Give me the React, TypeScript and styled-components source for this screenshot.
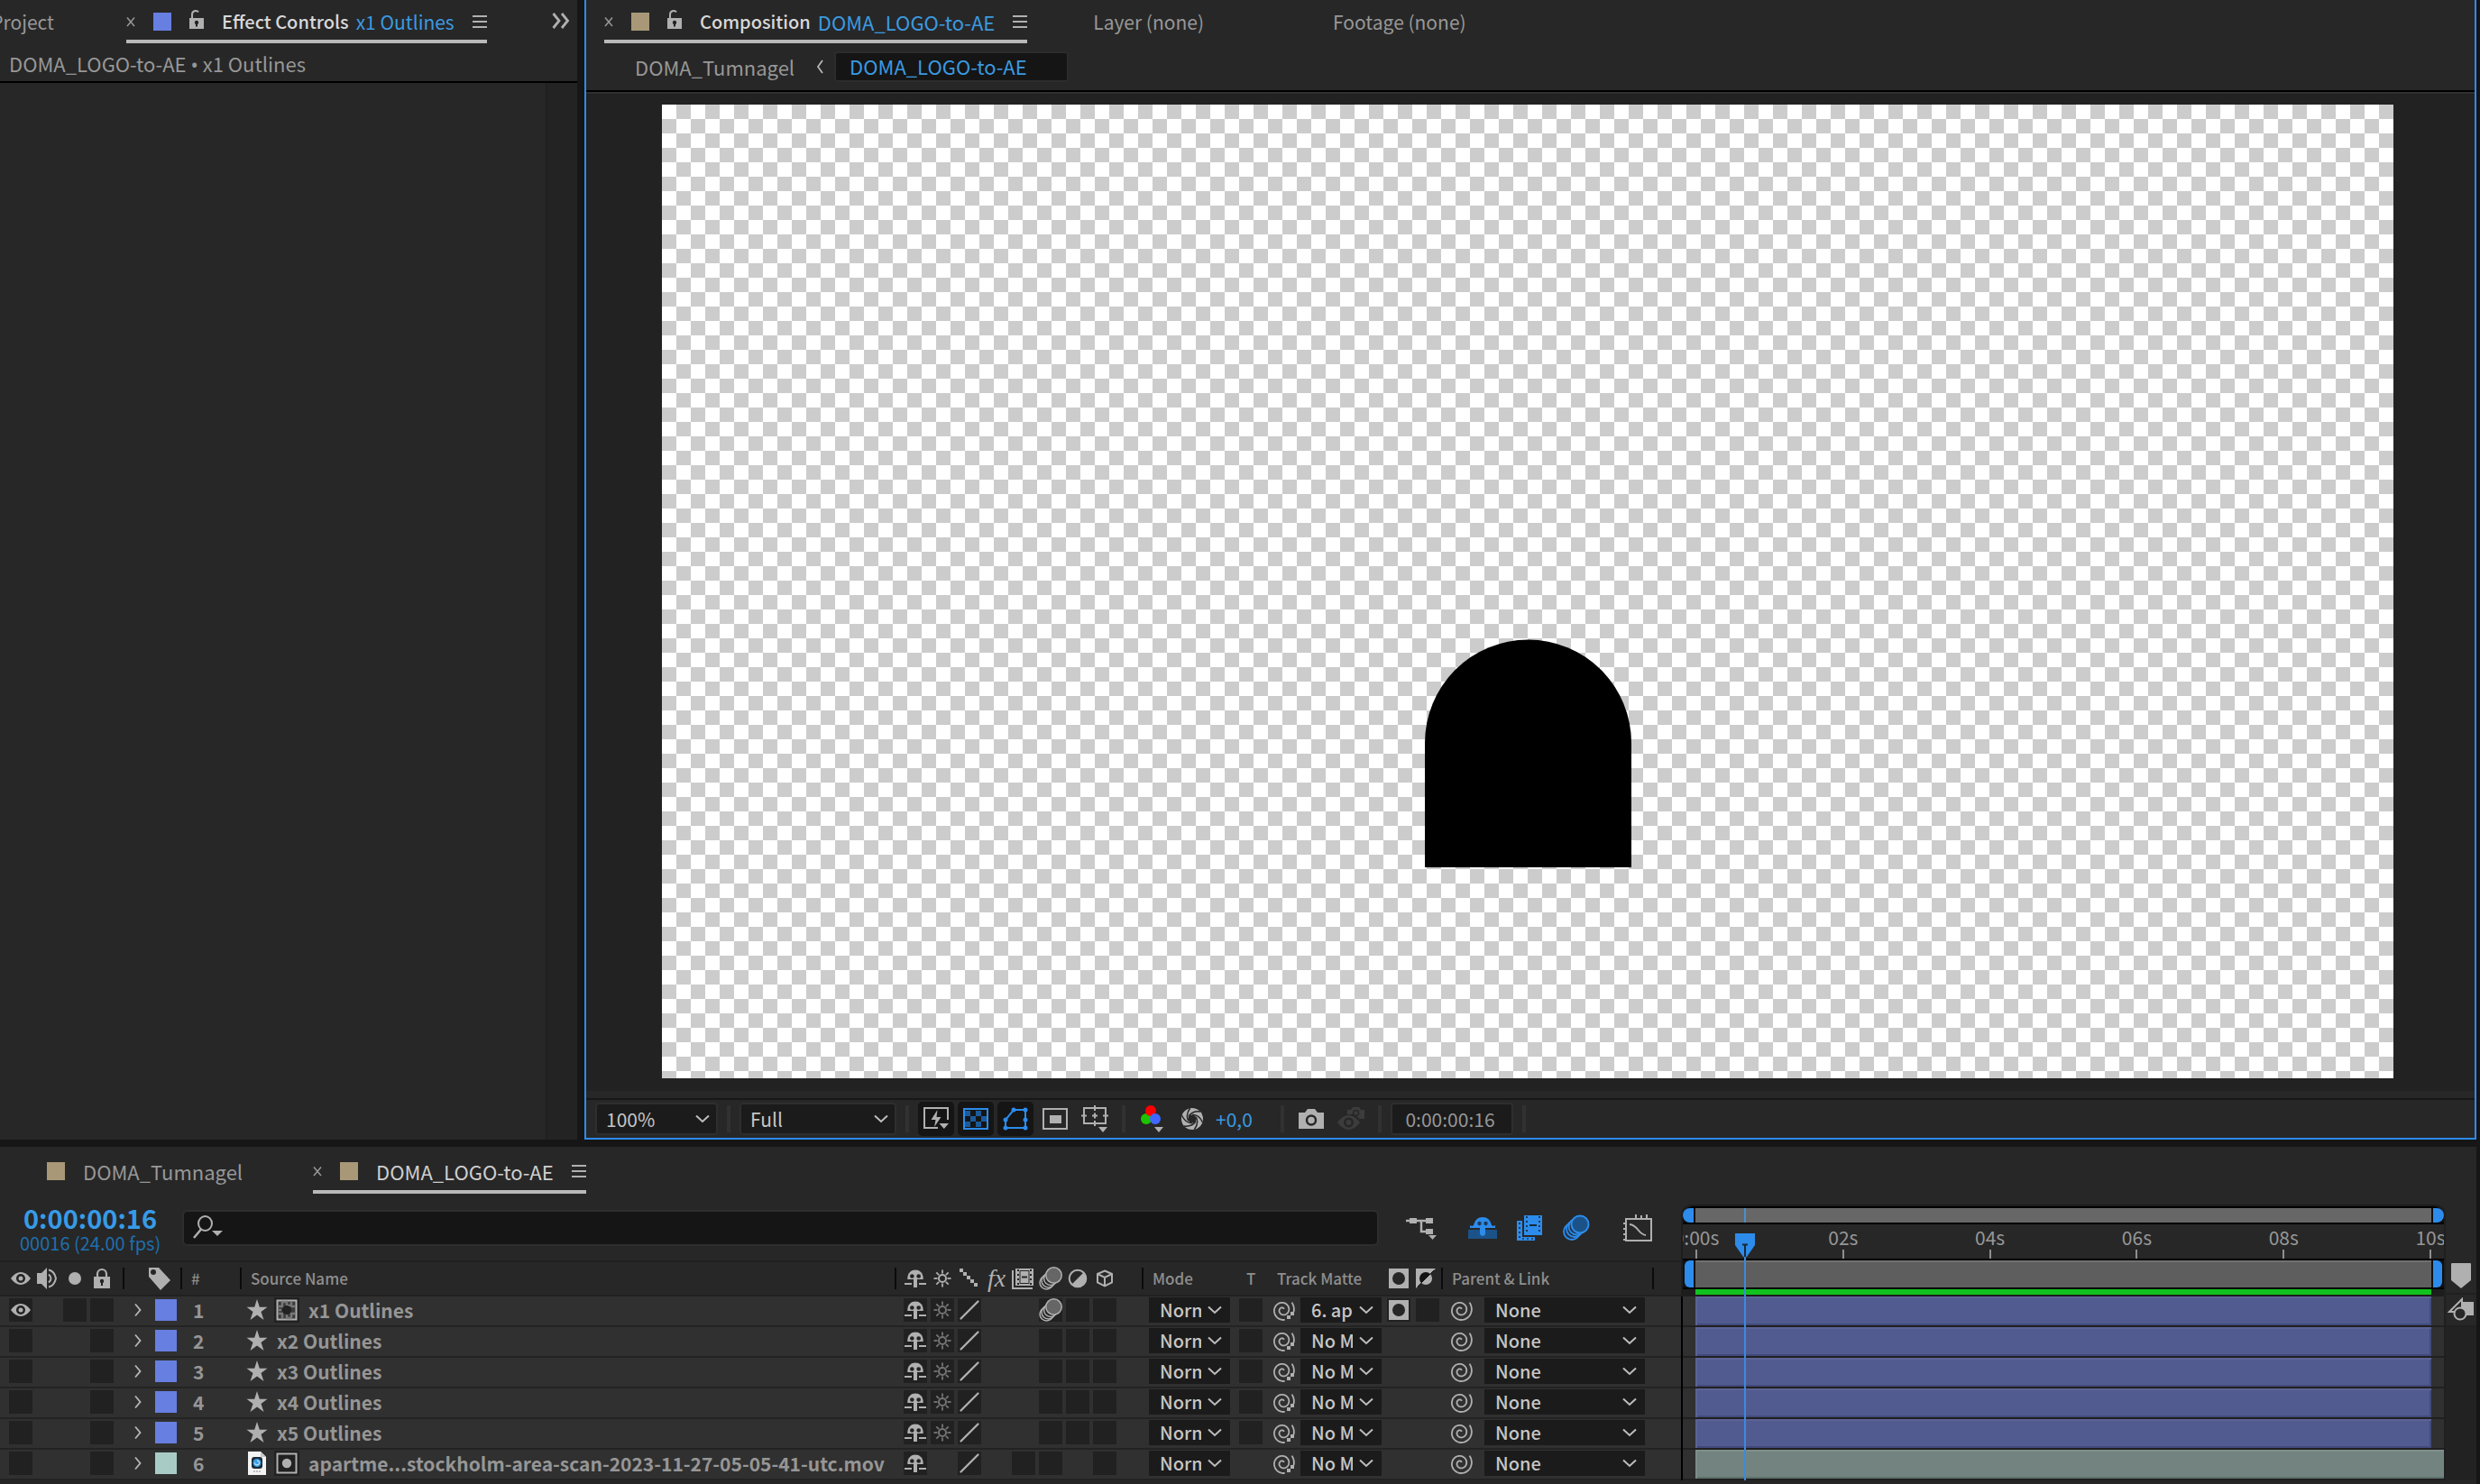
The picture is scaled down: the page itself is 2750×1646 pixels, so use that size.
import React from 'react';
import styled, { createGlobalStyle, css } from 'styled-components';

const c = {
  gap: '#161616',
  panel: '#272727',
  well: '#222222',
  row: '#303030',
  field: '#1b1b1b',
  icon: '#b0b0b0',
  text: '#979797',
  bright: '#d8d8d8',
  blue: '#2d8ceb',
  link: '#3b9ae1',
  tan: '#a89878',
  violet: '#667fe0',
  aqua: '#a9cbc6',
};

const GlobalStyle = createGlobalStyle`
  *, *::before, *::after { box-sizing: border-box; }
  html, body { margin: 0; background: ${c.gap}; }
  body, button, select, input {
    font-family: 'Noto Sans CJK SC', 'Noto Sans', sans-serif;
    font-size: 21px;
    line-height: 28px;
    color: ${c.text};
  }
  button { border: 0; padding: 0; margin: 0; background: none; }
  svg { display: block; flex: none; }
`;

const Window = styled.div`
  display: flex;
  flex-direction: column;
  gap: 8px;
  min-height: 100vh;
  padding-right: 4px;
  overflow: hidden;
`;

const Upper = styled.div`
  display: grid;
  grid-template-columns: minmax(0, 320fr) minmax(0, 1049fr);
  gap: 8px;
`;

const Panel = styled.section<{ $active?: boolean }>`
  display: flex;
  flex-direction: column;
  background: ${c.panel};
  min-width: 0;
  ${p => p.$active && css`
    border: solid ${c.blue};
    border-width: 0 2px 2px;
  `}
`;

/* ---------- tabs ---------- */

const TabBar = styled.header<{ $tall?: boolean; $inset?: number }>`
  display: flex;
  height: ${p => (p.$tall ? 52 : 48)}px;
  padding-top: ${p => (p.$tall ? 6 : 4)}px;
  padding-left: ${p => p.$inset ?? 0}px;
`;

const Tab = styled.div<{ $on?: boolean; $gapAfter?: number }>`
  display: flex;
  align-items: center;
  gap: 20px;
  border-bottom: 4px solid ${p => (p.$on ? '#b9b9b9' : 'transparent')};
  margin-right: ${p => p.$gapAfter ?? 0}px;
  white-space: nowrap;
`;

const ClippedTab = styled(Tab)`
  width: 60px;
  justify-content: flex-end;
  overflow: hidden;
`;

const TabLabel = styled.span<{ $on?: boolean; $large?: boolean }>`
  color: ${p => (p.$on ? '#cfcfcf' : c.text)};
  font-size: ${p => (p.$large ? 22 : 21)}px;
`;

const TabTitle = styled.span`
  display: flex;
  gap: 8px;
  font-size: 20px;
  font-weight: 500;
  color: ${c.bright};
`;

const TabTarget = styled.span<{ $large?: boolean }>`
  font-size: ${p => (p.$large ? 22 : 21)}px;
  font-weight: 400;
  color: ${c.link};
`;

const Swatch = styled.span<{ $color: string; $large?: boolean }>`
  width: ${p => (p.$large ? 24 : 20)}px;
  height: ${p => (p.$large ? 24 : 20)}px;
  background: ${p => p.$color};
`;

const Overflow = styled.button`
  margin-left: auto;
  padding-right: 8px;
  height: 38px;
`;

/* ---------- effect controls ---------- */

const EffectPath = styled.div`
  height: 44px;
  padding: 8px 10px 0;
  border-bottom: 2px solid #000;
  font-size: 22px;
`;

const Bullet = styled.span`
  font-family: 'Noto Sans', sans-serif;
`;

const EffectBody = styled.div`
  flex: 1;
  display: flex;
  justify-content: flex-end;
`;

const ScrollTrack = styled.div`
  width: 35px;
  background: #232323;
  border-left: 2px solid #202020;
`;

/* ---------- composition ---------- */

const Crumbs = styled.nav`
  display: flex;
  align-items: center;
  height: 54px;
  padding-left: 54px;
  border-bottom: 2px solid #000;
  font-size: 22px;
`;

const Crumb = styled.a<{ $on?: boolean }>`
  color: ${c.text};
  text-decoration: none;
  ${p => p.$on && css`
    margin-left: 12px;
    width: 260px;
    height: 34px;
    line-height: 28px;
    padding-left: 15px;
    color: ${c.link};
    background: #151515;
    border: 2px solid #2c2c2c;
    border-radius: 4px;
  `}
`;

const CrumbArrow = styled.span`
  margin-left: 24px;
`;

const Viewer = styled.div`
  background: ${c.well};
  border-top: 2px solid ${c.row};
  padding: 12px 90px 14px 84px;
`;

const Canvas = styled.div`
  aspect-ratio: 16 / 9;
  background: repeating-conic-gradient(#cccccc 0 25%, #ffffff 0 50%) 0 0 / 32px 32px;
  svg { width: 100%; height: 100%; }
`;

const Toolbar = styled.div`
  display: flex;
  align-items: center;
  gap: 10px;
  margin-top: 8px;
  height: 44px;
  padding-left: 10px;
  border-top: 2px solid #171717;
`;

const Rule = styled.span`
  width: 4px;
  height: 30px;
  background: #313131;
`;

const ToolGroup = styled.div`
  display: flex;
  align-items: center;
  gap: 4px;
`;

const Tool = styled.button<{ $on?: boolean }>`
  display: grid;
  place-items: center;
  width: 40px;
  height: 38px;
  border-radius: 5px;
  background: ${p => (p.$on ? '#151515' : 'none')};
`;

const Exposure = styled.button`
  width: 64px;
  padding-left: 2px;
  text-align: left;
  color: ${c.link};
`;

const Timecode = styled.input`
  width: 136px;
  height: 36px;
  padding: 0 4px 0 0;
  text-align: center;
  background: ${c.field};
  border: 2px solid #2e2e2e;
  border-radius: 4px;
`;

/* ---------- drop-downs ---------- */

const Pick = styled.span<{ $width: number; $bar?: boolean }>`
  display: grid;
  align-items: center;
  width: ${p => p.$width}px;
  height: ${p => (p.$bar ? 36 : 28)}px;
  background: ${c.field};
  ${p => p.$bar && css`
    border: 2px solid #2e2e2e;
    border-radius: 4px;
  `}
  select, svg { grid-area: 1 / 1; }
  svg { justify-self: end; margin-right: ${p => (p.$bar ? 7 : 9)}px; pointer-events: none; }
  select {
    appearance: none;
    width: 100%;
    height: 28px;
    margin: 0;
    padding: 0 32px 0 ${p => (p.$bar ? 10 : 12)}px;
    border: 0;
    background: none;
    font-size: ${p => (p.$bar ? 21 : 20)}px;
    font-weight: ${p => (p.$bar ? 400 : 500)};
    color: #c6c6c6;
    overflow: hidden;
    text-overflow: clip;
  }
`;

/* ---------- timeline ---------- */

const TimelineBody = styled.div`
  display: flex;
`;

const LayerSide = styled.div`
  width: 1864px;
  flex: none;
`;

const Controls = styled.div`
  display: flex;
  align-items: center;
  gap: 30px;
  height: 74px;
  padding: 10px 31px 8px 0;
`;

const Clock = styled.div`
  width: 172px;
  padding: 4px 0 0 22px;
  white-space: nowrap;
  display: grid;
  justify-items: start;
`;

const ClockTime = styled.span`
  padding-left: 4px;
  font-size: 29px;
  line-height: 30px;
  font-weight: 700;
  color: #379be8;
`;

const ClockFrames = styled.span`
  font-size: 20px;
  color: #1f6fae;
`;

const Search = styled.label`
  flex: 1;
  display: flex;
  align-items: center;
  height: 40px;
  padding-left: 10px;
  background: #151515;
  border: 2px solid #2e2e2e;
  border-radius: 6px;
  input {
    flex: 1;
    min-width: 0;
    border: 0;
    outline: 0;
    background: none;
  }
`;

const ControlButtons = styled.div`
  display: flex;
  gap: 34px;
`;

const Toggles = styled.div`
  display: flex;
  gap: 18px;
`;

const ControlButton = styled.button`
  display: grid;
  place-items: center;
  width: 34px;
  height: 34px;
`;

const Layers = styled.table`
  width: 1864px;
  table-layout: fixed;
  border-collapse: separate;
  border-spacing: 0;
  th, td { padding: 0; text-align: left; }
  th { height: 40px; border-top: 2px solid #202020; border-bottom: 2px solid #202020; background: ${c.panel}; }
  td { height: 34px; border-bottom: 2px solid #232323; background: ${c.row}; }
`;

const Head = styled.div<{ $pad?: number; $rule?: boolean; $after?: number }>`
  display: flex;
  align-items: center;
  gap: 4px;
  height: 24px;
  padding-left: ${p => p.$pad ?? 10}px;
  margin-right: ${p => p.$after ?? 0}px;
  border-right: ${p => (p.$rule ? '2px solid #0b0b0b' : '0')};
  font-size: 17px;
  font-weight: 500;
  line-height: 24px;
  color: #8e8e8e;
  white-space: nowrap;
`;

const MatteIcons = styled.span`
  display: flex;
  gap: 4px;
  margin-left: auto;
  padding-right: 4px;
`;

const Cells = styled.div<{ $pad?: number; $gap?: number }>`
  display: flex;
  align-items: center;
  gap: ${p => p.$gap ?? 4}px;
  height: 32px;
  padding-left: ${p => p.$pad ?? 0}px;
  padding-bottom: 2px;
`;

const Slot = styled.span`
  width: 26px;
  height: 26px;
  display: grid;
  place-items: center;
`;

const Switch = styled.button`
  width: 26px;
  height: 26px;
  display: grid;
  place-items: center;
  background: #212121;
`;

const FxMark = styled.span`
  font: italic 28px/24px 'Liberation Serif', serif;
  color: ${c.icon};
`;

const LayerText = styled.span`
  padding-left: 3px;
  font-weight: 700;
  color: #969696;
  white-space: nowrap;
`;

const SourceBadge = styled.span`
  display: grid;
  place-items: center;
  width: 28px;
  height: 28px;
  background: #212121;
`;

/* ---------- time graph ---------- */

const Graph = styled.div`
  position: relative;
  flex: 1;
  min-width: 0;
  margin-top: 12px;
  padding: 2px 0 0 2px;
  background: #1d1d1d;
  border-right: 2px solid #1f1f1f;
  border-radius: 12px 12px 0 0;
`;

const Strip = styled.div<{ $nav?: boolean }>`
  display: flex;
  gap: 2px;
  height: ${p => (p.$nav ? 20 : 34)}px;
  padding: 0 ${p => (p.$nav ? 0 : 2)}px;
  background: #101010;
  border: solid #000;
  border-width: 2px 0;
  ${p => p.$nav && css`border-radius: 12px 12px 0 0;`}
`;

const Handle = styled.button<{ $end?: boolean; $nav?: boolean }>`
  width: ${p => (p.$nav ? 12 : 10)}px;
  background: ${c.blue};
  border-radius: ${p => {
    const r = p.$nav ? 10 : 6;
    return p.$end ? `0 ${r}px ${r}px 0` : `${r}px 0 0 ${r}px`;
  }};
`;

const Range = styled.div<{ $nav?: boolean }>`
  flex: 1;
  background: ${p => (p.$nav ? '#676767' : '#5e5e5e')};
  border: solid #717171;
  border-width: ${p => (p.$nav ? 0 : 2)}px 0 0;
`;

const Ruler = styled.div`
  display: flex;
  justify-content: space-between;
  height: 38px;
  padding: 0 14px;
  background: ${c.panel};
  overflow: hidden;
`;

const Mark = styled.div`
  width: 2px;
  display: flex;
  flex-direction: column;
  align-items: center;
  white-space: nowrap;
  &::after { content: ''; flex: 1; width: 2px; background: #8f8f8f; }
`;

const Cache = styled.div`
  height: 8px;
  padding: 0 14px 2px;
  background: #1d1d1d;
  &::before { content: ''; display: block; height: 6px; background: #11c21f; }
`;

const Tracks = styled.div`
  margin-left: -2px;
  border-left: 2px solid #000;
`;

const Track = styled.div<{ $full?: boolean }>`
  height: 34px;
  padding: 0 ${p => (p.$full ? 0 : 14)}px 0 14px;
  background: ${c.row};
  border-bottom: 2px solid #202020;
`;

const Bar = styled.div<{ $footage?: boolean }>`
  height: 32px;
  background: ${p => (p.$footage ? '#738480' : '#525b90')};
  border: solid ${p => (p.$footage ? '#7f8e8a' : '#5c6396')};
  border-width: 2px 0 0 2px;
  box-shadow: inset ${p => (p.$footage ? '0 -2px #5f716c' : '-2px -2px #424a7c')};
`;

const PlayLayer = styled.div`
  position: absolute;
  inset: 0 14px 0 16px;
  pointer-events: none;
`;

const Playhead = styled.div`
  position: absolute;
  top: 2px;
  bottom: 0;
  width: 22px;
  margin-left: -10px;
  display: flex;
  flex-direction: column;
  align-items: center;
  &::before { content: ''; width: 2px; height: 16px; margin: 2px 0 12px; background: #4a8fd0; }
  &::after { content: ''; width: 2px; flex: 1; background: #3b8ade; }
`;

const MarkerBin = styled.div`
  width: 34px;
  flex: none;
  background: ${c.well};
`;

const MarkerCell = styled.div<{ $tall?: boolean }>`
  display: flex;
  justify-content: center;
  align-items: flex-end;
  height: ${p => (p.$tall ? 112 : 36)}px;
  padding-bottom: 5px;
  background: ${c.panel};
  border-bottom: 2px solid #202020;
`;

const Filler = styled.div`
  height: 4px;
  background: #252525;
`;

/* ---------- icons ---------- */

const Svg = ({ w, h = w, children }: { w: number; h?: number; children: React.ReactNode }) => (
  <svg width={w} height={h} viewBox={`0 0 ${w} ${h}`} fill="none" aria-hidden="true">{children}</svg>
);
const I = c.icon;

const Close = () => <Svg w={10} h={14}><path d="M1 2.5 9 12M9 2.5 1 12" stroke="#999" strokeWidth="1.5" /></Svg>;
const Burger = () => <Svg w={16} h={14}><path d="M0 1h16M0 7h16M0 13h16" stroke={I} strokeWidth="2" /></Svg>;
const OpenLock = () => (
  <Svg w={16} h={26}>
    <path d="M0 9h16v12H0z" fill={I} />
    <path d="M3 9V5a4 4 0 0 1 7-2.6" stroke={I} strokeWidth="2" />
    <circle cx="8" cy="14" r="2.2" fill="#222" /><path d="M7 14h2v4.5H7z" fill="#222" />
  </Svg>
);
const Chevrons = () => <Svg w={20} h={18}><path d="m1.5 1 6.500 8-6.500 8M11 1l6.500 8-6.500 8" stroke={I} strokeWidth="2.800" /></Svg>;
const Down = () => <Svg w={16} h={10}><path d="m1 1.500 7 6.500 7-6.500" stroke="#bdbdbd" strokeWidth="2" /></Svg>;
const Left = () => <Svg w={8} h={16}><path d="M7 1 2 8l5 7" stroke="#b5b5b5" strokeWidth="1.800" /></Svg>;
const Twirl = () => <Svg w={8} h={16}><path d="m1 1.500 5.500 6.500L1 14.500" stroke="#b8b8b8" strokeWidth="1.800" /></Svg>;

const FastPreview = () => (
  <Svg w={30} h={28}>
    <path d="M17 24H2V2h26v13" stroke={I} strokeWidth="2" />
    <path d="m16.500 4-7 11h5l-1.500 8 7.500-11h-5z" fill={I} />
    <path d="M18.500 19h10.500l-5.200 6z" fill={I} />
  </Svg>
);
const Grid = () => (
  <Svg w={28} h={24}>
    <path d="M1 1h26v22H1z" stroke={c.blue} strokeWidth="2" />
    <path d="M2 3h6v6H2zM14 3h6v6h-6zM8 9h6v6H8zM20 9h6v6h-6zM2 15h6v6H2zM14 15h6v6h-6z" fill="#1b5b9d" />
  </Svg>
);
const MaskPath = () => (
  <Svg w={28} h={26}>
    <path d="M3 23V14L12 3h13v20z" stroke={c.blue} strokeWidth="2" />
    {[[12, 3], [25, 3], [3, 14], [25, 14], [3, 23], [25, 23]].map(([x, y]) => (
      <circle key={`${x}-${y}`} cx={x} cy={y} r="2.500" fill={c.blue} />
    ))}
  </Svg>
);
const Region = () => (
  <Svg w={28} h={24}><path d="M1 1h26v22H1z" stroke={I} strokeWidth="2" /><path d="M8 8h13v9H8z" fill={I} /></Svg>
);
const Guides = () => (
  <Svg w={30} h={30}>
    <path d="M3 3h24v17H3z" stroke={I} strokeWidth="2" />
    <path d="M15 0v6M15 17v6M0 11.500h6M24 11.500h6M15 8.500v6M12 11.500h6" stroke={I} strokeWidth="2" />
    <path d="M19 24h10l-5 6z" fill={I} />
  </Svg>
);
const Channels = () => (
  <Svg w={26} h={30}>
    <circle cx="6" cy="15" r="6" fill="#1cc400" /><circle cx="11" cy="6" r="6" fill="#ff0000" /><circle cx="16" cy="15" r="6" fill="#4068ff" />
    <path d="M15 24h10l-5 6z" fill={I} />
  </Svg>
);
const Aperture = () => (
  <Svg w={24}>
    <circle cx="12" cy="12" r="12" fill={I} /><circle cx="12" cy="12" r="4.500" fill={c.panel} />
    {[0, 60, 120, 180, 240, 300].map(a => (
      <path key={a} d="M8 9.500Q12 3 21 4" transform={`rotate(${a} 12 12)`} stroke={c.panel} strokeWidth="1.500" />
    ))}
  </Svg>
);
const Camera = () => (
  <Svg w={28} h={24}>
    <path d="M0 5h7l3-4h8l3 4h7v18H0z" fill={I} /><circle cx="14" cy="13.500" r="5" stroke={c.panel} strokeWidth="2.500" />
  </Svg>
);
const ShowSnapshot = () => (
  <Svg w={30} h={28}>
    <path d="M0 18q6-8 12.500-8T25 18q-6 8-12.500 8T0 18Z" fill="#3c3c3c" /><circle cx="12.500" cy="18" r="5.500" fill={c.panel} /><circle cx="12.500" cy="18" r="3" fill="#3c3c3c" />
    <path d="M11 4h4l2-3h7l2 3h4v10h-5l-7-5h-7z" fill="#3c3c3c" /><circle cx="20.500" cy="7.500" r="3" stroke={c.panel} strokeWidth="1.500" />
  </Svg>
);
const Magnifier = () => (
  <Svg w={34} h={28}>
    <ellipse cx="13.500" cy="9" rx="7.500" ry="8" stroke={I} strokeWidth="2" /><path d="M9 15.500 1 25" stroke={I} strokeWidth="2.500" />
    <path d="M21 17h12l-6 6z" fill={I} />
  </Svg>
);
const Flow = () => (
  <Svg w={34} h={26}>
    <path d="M0 5h26M17 5v12h8" stroke={I} strokeWidth="2.500" />
    <path d="M4 2h8v6H4zM22 2h8v6h-8zM22 14h8v6h-8z" fill={I} /><path d="M25 21h9l-4.500 5z" fill={I} />
  </Svg>
);
const HideShy = () => (
  <Svg w={32} h={26}>
    <path d="M0 15h32v10H0z" fill="#1b5288" />
    <path d="M2 13v-3l2 1 2-1q2-9 10-9t10 9l2 1 2-1v3z" fill={c.blue} />
    <circle cx="12.500" cy="8" r="2.200" fill="#1b3a5c" /><circle cx="19.500" cy="8" r="2.200" fill="#1b3a5c" />
    <path d="M13 10h6v10q-3 4-6 0z" fill={c.blue} />
  </Svg>
);
const FrameBlend = () => (
  <Svg w={28}>
    <path d="M0 6h6v18h14v4H0z" fill={c.blue} /><path d="M8 0h20v22H8z" fill={c.blue} />
    <path d="M11 1v20M25 1v20M3 8v17" stroke="#1c3a5a" strokeWidth="2" strokeDasharray="2 3" />
    <path d="M6 26h14" stroke="#1c3a5a" strokeWidth="1.500" strokeDasharray="2 3" /><path d="M14 11h8" stroke="#16293c" strokeWidth="2" />
  </Svg>
);
const BlurAll = () => (
  <Svg w={30}>
    {[[10, 19], [13, 16], [15.5, 13.5]].map(([x, y]) => <circle key={x} cx={x} cy={y} r="9" fill="#1f3650" stroke={c.blue} strokeWidth="1.800" />)}
    <circle cx="19" cy="11" r="9.500" fill="#1b5288" stroke={c.blue} strokeWidth="2" />
  </Svg>
);
const GraphEditor = () => (
  <Svg w={32} h={30}>
    <path d="M3 5h28v24H3z" stroke={I} strokeWidth="2" /><path d="M7 11c10 1 9 11 18 12" stroke={I} strokeWidth="2" />
    <path d="M14 4V0M20 4V1M26 4V0M2 10H0M2 16H0M2 22H0M2 28H0" stroke={I} strokeWidth="2" />
  </Svg>
);

const Eye = () => (
  <Svg w={22} h={16}>
    <path d="M0 8q5-7 11-7t11 7q-5 7-11 7T0 8Z" fill={I} /><circle cx="11" cy="8" r="5" fill="#222" /><circle cx="11" cy="8" r="2.500" fill={I} />
  </Svg>
);
const Speaker = () => (
  <Svg w={24}>
    <path d="M0 6h5l6-6v24l-6-6H0z" fill={I} /><path d="M13 7.500q5 4.500 0 9M13 2.500q6 1 8 9.500-2 8.500-8 9.500" stroke={I} strokeWidth="2" />
  </Svg>
);
const Dot = () => <Svg w={14}><circle cx="7" cy="7" r="7" fill={I} /></Svg>;
const Lock = () => (
  <Svg w={18} h={24}>
    <path d="M0 10h18v13H0z" fill={I} /><path d="M4 10V7a5 5 0 0 1 10 0v3" stroke={I} strokeWidth="2.200" />
    <circle cx="9" cy="15" r="2.200" fill="#222" /><path d="M8 15h2v5H8z" fill="#222" />
  </Svg>
);
const Tag = () => (
  <Svg w={24} h={25}><path d="M0 0h11l13 14-11 11L0 10z" fill={I} /><circle cx="5" cy="5" r="3" fill={c.panel} /></Svg>
);
const Star = () => (
  <Svg w={24} h={24}><path d="m12 0 2.800 8.800H23.500l-7 5.200 3 9L12 17.600 4.500 23l3-9-7-5.200h8.700z" fill={I} /></Svg>
);
const MovieFile = () => (
  <Svg w={24} h={26}>
    <path d="M2 0h14l6 6v20H2z" fill="#f4f4f4" /><path d="M16 0v6h6z" fill="#c9c9c9" />
    <rect x="6" y="6" width="12" height="13" rx="3" fill="#1c2a36" /><circle cx="12" cy="12.500" r="4.500" fill="#3aa0e6" />
    <path d="M12 10a2.500 2.500 0 1 1-2.500 2.500" stroke="#e5f3fc" strokeWidth="1" /><path d="M8 22h8" stroke="#aaa" strokeWidth="1.500" strokeDasharray="2 1" />
  </Svg>
);
const MatteSource = () => (
  <Svg w={24}>
    <path d="M1.500 1.500h21v21h-21z" stroke={I} strokeWidth="2" fill="#3a3a3a" />
    <path d="M3 8h4V3h5v4h5V3M21 8h-4M3 16h4v5M21 16h-4v5h-5v-4M3 12h3" stroke="#777" strokeWidth="2.500" />
    <circle cx="12" cy="12" r="5" fill="#222" />
  </Svg>
);
const MatteUsed = () => (
  <Svg w={24}><path d="M1.500 1.500h21v21h-21z" stroke={I} strokeWidth="2" /><circle cx="12" cy="12" r="5.200" fill={I} /></Svg>
);
const Shy = () => (
  <Svg w={26}>
    <path d="M4.300 14C3.500 0 22.500 0 21.700 14z" fill={I} /><circle cx="9.300" cy="10.500" r="2.300" fill="#222" /><circle cx="16.700" cy="10.500" r="2.300" fill="#222" />
    <path d="M11 12h4v11h-4zM1 18h8v2H1zM17 18h8v2h-8z" fill={I} />
  </Svg>
);
const Sun = ({ dim }: { dim?: boolean }) => {
  const s = dim ? '#757575' : I;
  return (
    <Svg w={26}>
      <circle cx="13" cy="13" r="4" stroke={s} strokeWidth="2" />
      {[0, 45, 90, 135, 180, 225, 270, 315].map(a => (
        <path key={a} d="M13 3.500v4" transform={`rotate(${a} 13 13)`} stroke={s} strokeWidth="1.800" />
      ))}
    </Svg>
  );
};
const Quality = () => <Svg w={26}><path d="M3.500 22.500 22.500 3.500" stroke={I} strokeWidth="2.300" strokeLinecap="round" /></Svg>;
const Steps = () => <Svg w={26}><path d="M2 2h4v4H2zM6 6h4v4H6zM10 10h4v4h-4zM14 14h4v4h-4zM18 18h4v4h-4z" fill={I} /></Svg>;
const Film = () => (
  <Svg w={26}>
    <path d="M1 4v20h22" stroke={I} strokeWidth="2" /><path d="M4 2h20v19H4z" fill={I} />
    <path d="M7 3v17M21 3v17" stroke="#262626" strokeWidth="2" strokeDasharray="2 3" /><path d="M9 4.500h10v14H9z" stroke="#262626" strokeWidth="1" /><path d="M11 11.500h6" stroke="#262626" strokeWidth="2" />
  </Svg>
);
const Blur = () => (
  <Svg w={26}>
    {[[8.5, 17.5], [10.5, 15.5], [13, 13]].map(([x, y]) => <circle key={x} cx={x} cy={y} r="7.500" fill="#252525" stroke={I} strokeWidth="1.500" />)}
    <circle cx="16.500" cy="9.500" r="8.700" fill="#666" stroke={I} strokeWidth="1.500" />
  </Svg>
);
const Adjust = () => <Svg w={26}><circle cx="13" cy="13" r="9.300" stroke={I} strokeWidth="2" /><path d="M20 6a9.500 9.500 0 0 1-14 14z" fill={I} /></Svg>;
const Cube = () => <Svg w={26}><path d="m13 4.500 8 3.500v9.500L13 21.500 5 17.500V8zM5 8l8 4 8-4M13 12v9.500" stroke={I} strokeWidth="2" /></Svg>;

/* Inward clockwise spiral between two turn counts, starting at the upper right. */
const spiral = (from: number, to: number) => {
  const steps = Math.round((to - from) * 36);
  return Array.from({ length: steps + 1 }, (_, i) => {
    const t = from + ((to - from) * i) / steps;
    const a = (t * 360 - 40) * (Math.PI / 180);
    const r = 13 * (1 - t / 2.3);
    return `${i ? 'L' : 'M'}${(10.5 + r * Math.cos(a)).toFixed(1)} ${(12 + r * Math.sin(a)).toFixed(1)}`;
  }).join('');
};
const fullSpiral = spiral(0, 2);
const brokenSpiral = spiral(0, 0.14) + spiral(0.33, 2);

const Whip = ({ matte }: { matte?: boolean }) => (
  <Svg w={24}>
    <path d={matte ? brokenSpiral : fullSpiral} stroke={I} strokeWidth="1.800" strokeLinejoin="round" />
    {matte && <path d="M15 18h4v4h-4zM19 14h4v4h-4z" fill={I} />}
  </Svg>
);
const AlphaMatte = () => <Svg w={22}><path d="M0 0h22v22H0z" fill={I} /><circle cx="11" cy="11" r="7" fill="#262626" /></Svg>;
const InvertMatte = () => (
  <Svg w={22}>
    <path d="M0 0h22L0 22z" fill={I} /><circle cx="11" cy="11" r="7" fill="#141414" /><path d="M16 6a7 7 0 0 1-10 10z" fill={I} /><path d="M20 2 2 20" stroke="#141414" strokeWidth="1" />
  </Svg>
);
const Marker = () => <Svg w={22} h={28}><path d="M0 1q0-1 1-1h20q1 0 1 1v18L11 28 0 19z" fill={I} /></Svg>;
const Shapes = () => (
  <Svg w={30} h={26}>
    <path d="M15 5h14v15H15z" fill={I} /><path d="M2 16 16 2v14z" stroke={I} strokeWidth="2" fill={c.panel} />
    <circle cx="14" cy="18" r="6.500" fill={c.panel} stroke={I} strokeWidth="2" />
  </Svg>
);
const PlayheadCap = () => (
  <Svg w={22} h={26}>
    <path d="M0 0h22v13l-9 13H9L0 13z" fill={c.blue} /><path d="M8 12.500h6M11 12v14" stroke="#1c2733" strokeWidth="2" />
  </Svg>
);

/* ---------- data ---------- */

type Layer = {
  name: string;
  kind: 'shape' | 'movie';
  badge?: 'source' | 'matte';
  visible?: boolean;
  blur?: boolean;
  matte: string;
};

const layers: Layer[] = [
  { name: 'x1 Outlines', kind: 'shape', badge: 'source', visible: true, blur: true, matte: '6. apartment' },
  { name: 'x2 Outlines', kind: 'shape', matte: 'No Matte' },
  { name: 'x3 Outlines', kind: 'shape', matte: 'No Matte' },
  { name: 'x4 Outlines', kind: 'shape', matte: 'No Matte' },
  { name: 'x5 Outlines', kind: 'shape', matte: 'No Matte' },
  { name: 'apartme...stockholm-area-scan-2023-11-27-05-05-41-utc.mov', kind: 'movie', badge: 'matte', matte: 'No Matte' },
];

const columns = [138, 64, 66, 726, 274, 106, 32, 194, 264];
const marks = ['0:00s', '02s', '04s', '06s', '08s', '10s'];
const currentFrame = 16;
const totalFrames = 240;

const Dropdown = ({ label, value, width, bar }: { label: string; value: string; width: number; bar?: boolean }) => (
  <Pick $width={width} $bar={bar}>
    <select aria-label={label} defaultValue={value}><option>{value}</option></select>
    <Down />
  </Pick>
);

const LayerRow = ({ layer, n }: { layer: Layer; n: number }) => {
  const shape = layer.kind === 'shape';
  return (
    <tr>
      <td>
        <Cells $pad={10}>
          <Switch aria-label="Video">{layer.visible && <Eye />}</Switch>
          <Slot />
          {n === 1 ? <Switch aria-label="Solo" /> : <Slot />}
          <Switch aria-label="Lock" />
        </Cells>
      </td>
      <td>
        <Cells $pad={11} $gap={15}>
          <button aria-label="Expand layer"><Twirl /></button>
          <Swatch $color={shape ? c.violet : c.aqua} $large />
        </Cells>
      </td>
      <td><Cells $pad={9}><LayerText>{n}</LayerText></Cells></td>
      <td>
        <Cells $pad={5} $gap={7}>
          {shape ? <Star /> : <MovieFile />}
          {layer.badge && <SourceBadge>{layer.badge === 'source' ? <MatteSource /> : <MatteUsed />}</SourceBadge>}
          <LayerText>{layer.name}</LayerText>
        </Cells>
      </td>
      <td>
        <Cells $pad={8}>
          <Switch aria-label="Shy"><Shy /></Switch>
          {shape ? <Switch aria-label="Continuously rasterize"><Sun dim /></Switch> : <Slot />}
          <Switch aria-label="Quality"><Quality /></Switch>
          <Slot />
          {shape ? <Slot /> : <Switch aria-label="Frame blending" />}
          <Switch aria-label="Motion blur">{layer.blur && <Blur />}</Switch>
          {shape ? <Switch aria-label="Adjustment layer" /> : <Slot />}
          <Switch aria-label="3D layer" />
        </Cells>
      </td>
      <td><Cells $pad={6}><Dropdown label="Mode" value="Normal" width={90} /></Cells></td>
      <td><Cells>{shape ? <Switch aria-label="Preserve transparency" /> : <Slot />}</Cells></td>
      <td>
        <Cells $pad={6} $gap={6}>
          <button aria-label="Matte pick whip"><Whip matte /></button>
          <Dropdown label="Track matte" value={layer.matte} width={90} />
          {n === 1 && <><Switch aria-label="Alpha matte"><AlphaMatte /></Switch><Switch aria-label="Invert matte" /></>}
        </Cells>
      </td>
      <td>
        <Cells $pad={9} $gap={13}>
          <button aria-label="Parent pick whip"><Whip /></button>
          <Dropdown label="Parent" value="None" width={178} />
        </Cells>
      </td>
    </tr>
  );
};

export default function App() {
  return (
    <Window>
      <GlobalStyle />
      <Upper>
        <Panel aria-label="Effect Controls">
          <TabBar>
            <ClippedTab $gapAfter={80}><TabLabel>Project</TabLabel></ClippedTab>
            <Tab $on>
              <Close /><Swatch $color={c.violet} /><OpenLock />
              <TabTitle>Effect Controls <TabTarget>x1 Outlines</TabTarget></TabTitle>
              <Burger />
            </Tab>
            <Overflow aria-label="More tabs"><Chevrons /></Overflow>
          </TabBar>
          <EffectPath>DOMA_LOGO-to-AE <Bullet>•</Bullet> x1 Outlines</EffectPath>
          <EffectBody><ScrollTrack /></EffectBody>
        </Panel>

        <Panel $active aria-label="Composition">
          <TabBar $inset={20}>
            <Tab $on $gapAfter={73}>
              <Close /><Swatch $color={c.tan} /><OpenLock />
              <TabTitle>Composition <TabTarget $large>DOMA_LOGO-to-AE</TabTarget></TabTitle>
              <Burger />
            </Tab>
            <Tab $gapAfter={143}><TabLabel>Layer (none)</TabLabel></Tab>
            <Tab><TabLabel>Footage (none)</TabLabel></Tab>
          </TabBar>
          <Crumbs>
            <Crumb href="#tumnagel">DOMA_Tumnagel</Crumb>
            <CrumbArrow><Left /></CrumbArrow>
            <Crumb href="#logo" $on>DOMA_LOGO-to-AE</Crumb>
          </Crumbs>
          <Viewer>
            <Canvas>
              <svg viewBox="0 0 1920 1080" role="img" aria-label="Composition preview">
                <path d="M846 846V708a114.500 114.500 0 0 1 229 0v138z" fill="#000" />
              </svg>
            </Canvas>
          </Viewer>
          <Toolbar>
            <Dropdown label="Magnification" value="100%" width={136} bar />
            <Rule />
            <Dropdown label="Resolution" value="Full" width={174} bar />
            <Rule />
            <ToolGroup>
              <Tool $on aria-label="Fast previews"><FastPreview /></Tool>
              <Tool $on aria-label="Transparency grid"><Grid /></Tool>
              <Tool $on aria-label="Mask and shape paths"><MaskPath /></Tool>
              <Tool aria-label="Region of interest"><Region /></Tool>
              <Tool aria-label="Grid and guides"><Guides /></Tool>
            </ToolGroup>
            <Rule />
            <ToolGroup>
              <Tool aria-label="Channels"><Channels /></Tool>
              <Tool aria-label="Reset exposure"><Aperture /></Tool>
              <Exposure>+0,0</Exposure>
            </ToolGroup>
            <Rule />
            <ToolGroup>
              <Tool aria-label="Take snapshot"><Camera /></Tool>
              <Tool aria-label="Show snapshot"><ShowSnapshot /></Tool>
            </ToolGroup>
            <Rule />
            <Timecode aria-label="Preview time" defaultValue="0:00:00:16" />
            <Rule />
          </Toolbar>
        </Panel>
      </Upper>

      <Panel aria-label="Timeline">
        <TabBar $tall $inset={52}>
          <Tab $gapAfter={78}><Swatch $color={c.tan} /><TabLabel $large>DOMA_Tumnagel</TabLabel></Tab>
          <Tab $on><Close /><Swatch $color={c.tan} /><TabLabel $on $large>DOMA_LOGO-to-AE</TabLabel><Burger /></Tab>
        </TabBar>
        <TimelineBody>
          <LayerSide>
            <Controls>
              <Clock><ClockTime>0:00:00:16</ClockTime><ClockFrames>00016 (24.00 fps)</ClockFrames></Clock>
              <Search><Magnifier /><input aria-label="Search layers" /></Search>
              <ControlButtons>
                <ControlButton aria-label="Mini-flowchart"><Flow /></ControlButton>
                <Toggles>
                  <ControlButton aria-label="Hide shy layers"><HideShy /></ControlButton>
                  <ControlButton aria-label="Frame blending"><FrameBlend /></ControlButton>
                  <ControlButton aria-label="Motion blur"><BlurAll /></ControlButton>
                </Toggles>
                <ControlButton aria-label="Graph editor"><GraphEditor /></ControlButton>
              </ControlButtons>
            </Controls>
            <Layers>
              <colgroup>{columns.map((w, i) => <col key={i} width={w} />)}</colgroup>
              <thead>
                <tr>
                  <th><Head $rule><Slot><Eye /></Slot><Slot><Speaker /></Slot><Slot><Dot /></Slot><Slot><Lock /></Slot></Head></th>
                  <th><Head $rule $pad={27}><Tag /></Head></th>
                  <th><Head $rule>#</Head></th>
                  <th><Head $rule>Source Name</Head></th>
                  <th>
                    <Head $rule $pad={8}>
                      <Slot><Shy /></Slot><Slot><Sun /></Slot><Slot><Steps /></Slot><Slot><FxMark>fx</FxMark></Slot>
                      <Slot><Film /></Slot><Slot><Blur /></Slot><Slot><Adjust /></Slot><Slot><Cube /></Slot>
                    </Head>
                  </th>
                  <th><Head>Mode</Head></th>
                  <th><Head $pad={8}>T</Head></th>
                  <th>
                    <Head $rule>
                      Track Matte
                      <MatteIcons><Slot><AlphaMatte /></Slot><Slot><InvertMatte /></Slot></MatteIcons>
                    </Head>
                  </th>
                  <th><Head $rule $after={30}>Parent &amp; Link</Head></th>
                </tr>
              </thead>
              <tbody>{layers.map((l, i) => <LayerRow key={l.name} layer={l} n={i + 1} />)}</tbody>
            </Layers>
          </LayerSide>

          <Graph>
            <Strip $nav>
              <Handle $nav aria-label="Navigator start" /><Range $nav /><Handle $nav $end aria-label="Navigator end" />
            </Strip>
            <Ruler>{marks.map(m => <Mark key={m}>{m}</Mark>)}</Ruler>
            <Strip>
              <Handle aria-label="Work area start" /><Range /><Handle $end aria-label="Work area end" />
            </Strip>
            <Cache />
            <Tracks>
              {layers.map(l => (
                <Track key={l.name} $full={l.kind === 'movie'}><Bar $footage={l.kind === 'movie'} /></Track>
              ))}
            </Tracks>
            <PlayLayer>
              <Playhead style={{ left: `${(currentFrame / totalFrames) * 100}%` }}>
                <PlayheadCap />
              </Playhead>
            </PlayLayer>
          </Graph>

          <MarkerBin>
            <MarkerCell $tall><Marker /></MarkerCell>
            <MarkerCell><Shapes /></MarkerCell>
          </MarkerBin>
        </TimelineBody>
        <Filler />
      </Panel>
    </Window>
  );
}
